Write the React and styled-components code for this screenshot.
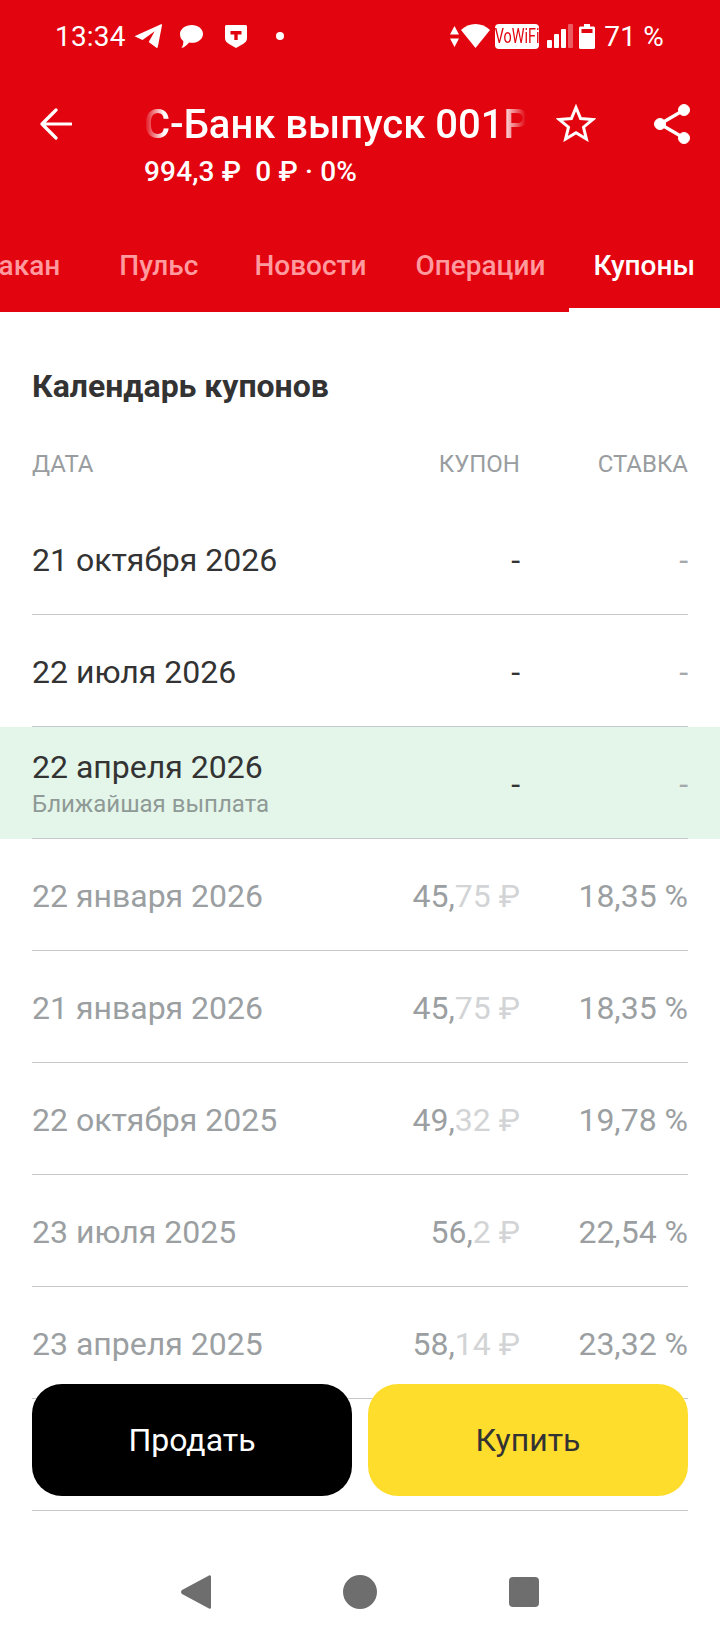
import React from "react";
import styled, { createGlobalStyle } from "styled-components";

const GlobalStyle = createGlobalStyle`
  html, body {
    margin: 0;
    padding: 0;
    background: #fff;
  }
  body {
    font-family: Roboto, "Liberation Sans", sans-serif;
  }
`;

const TABS = [
  { label: "Стакан" },
  { label: "Пульс", extra: 10 },
  { label: "Новости", extra: 7 },
  { label: "Операции" },
  { label: "Купоны", active: true, extra: -1 },
];

const ROWS = [
  { date: "21 октября 2026" },
  { date: "22 июля 2026" },
  { date: "22 апреля 2026", note: "Ближайшая выплата" },
  { date: "22 января 2026", whole: "45,", frac: "75", rate: "18,35 %" },
  { date: "21 января 2026", whole: "45,", frac: "75", rate: "18,35 %" },
  { date: "22 октября 2025", whole: "49,", frac: "32", rate: "19,78 %" },
  { date: "23 июля 2025", whole: "56,", frac: "2", rate: "22,54 %" },
  { date: "23 апреля 2025", whole: "58,", frac: "14", rate: "23,32 %" },
];

function App() {
  return (
    <Page>
      <GlobalStyle />
      <Header>
        <StatusBar>
          <Time>13:34</Time>
          <StatusIcon $left={8}>
            <svg width="28" height="24" viewBox="0 0 28 24" fill="#fff">
              <path d="M0.5 12.2 27 0.3c.7-.3 1.2.2 1 1L23.8 23c-.2.9-1 1.2-1.7.6l-7.4-5.700 6-10.600-12.200 8.600z" />
            </svg>
          </StatusIcon>
          <StatusIcon $left={18}>
            <svg width="23" height="23" viewBox="0 0 23 23" fill="#fff">
              <path d="M11.800 0C18 0 23 3.900 23 8.900s-5 8.900-11.200 8.900c-1 0-1.900-.1-2.800-.3C7.400 19.800 4.600 22.300 1.500 23c1.300-2 2-4.300 1.800-6.900C1.200 14.500 0 11.900 0 8.900 0 3.900 5.500 0 11.800 0z" />
            </svg>
          </StatusIcon>
          <StatusIcon $left={22}>
            <svg width="22" height="23" viewBox="0 0 22 23">
              <path fill="#fff" d="M1.500 0h19c.8 0 1.500.7 1.500 1.500V13c0 3-1.500 4.500-4 6l-7 4-7-4c-2.500-1.500-4-3-4-6V1.500C0 .7.700 0 1.500 0z" />
              <path fill="#e2040f" d="M5.500 6h11v3.500h-3.800V15H9.300V9.500H5.500z" />
            </svg>
          </StatusIcon>
          <StatusIcon $left={29}>
            <svg width="8" height="8" viewBox="0 0 8 8" fill="#fff">
              <circle cx="4" cy="4" r="4" />
            </svg>
          </StatusIcon>
          <StatusRight>
            <StatusIcon>
              <svg width="9" height="21" viewBox="0 0 9 21" fill="#fff">
                <path d="M4.500 0 9 8.500H0zM0 12.500h9L4.500 21z" />
              </svg>
            </StatusIcon>
            <StatusIcon $left={2}>
              <svg width="29" height="24" viewBox="0 0 29 24" fill="#fff">
                <path d="M14.500 0C20 0 25 2.200 29 6L14.500 24 0 6C4 2.200 9 0 14.500 0z" />
              </svg>
            </StatusIcon>
            <VoWifi>
              <VoWifiText>VoWiFi</VoWifiText>
            </VoWifi>
            <StatusIcon $left={8}>
              <svg width="26" height="24" viewBox="0 0 26 24" fill="#fff">
                <rect x="0" y="16" width="5" height="8" rx="1" />
                <rect x="7" y="10" width="5" height="14" rx="1" />
                <rect x="14" y="5" width="5" height="19" rx="1" />
                <rect x="21" y="0" width="5" height="24" rx="1" opacity="0.35" />
              </svg>
            </StatusIcon>
            <StatusIcon $left={6}>
              <svg width="16" height="25" viewBox="0 0 16 25">
                <path fill="#fff" d="M5 0h6v2.500h3.500c.8 0 1.500.7 1.500 1.500v19.500c0 .8-.7 1.500-1.500 1.500h-13C.700 25 0 24.300 0 23.500V4c0-.8.700-1.500 1.500-1.500H5z" />
                <rect x="2.500" y="5" width="11" height="4" fill="#e2040f" />
              </svg>
            </StatusIcon>
            <Battery>71 %</Battery>
          </StatusRight>
        </StatusBar>

        <Toolbar>
          <BackButton>
            <svg width="32" height="32" viewBox="0 0 32 32" fill="none" stroke="#fff" strokeWidth="3.200" strokeLinecap="round" strokeLinejoin="round">
              <path d="M31 16H2M16 2 2 16l14 14" />
            </svg>
          </BackButton>
          <TitleBlock>
            <TitleClip>
              <TitleText>С-Банк выпуск 001Р</TitleText>
            </TitleClip>
            <PriceLine>994,3 ₽&nbsp;&nbsp;0 ₽ · 0%</PriceLine>
          </TitleBlock>
          <StarButton>
            <svg width="40" height="38" viewBox="0 0 40 38" fill="none" stroke="#fff" strokeWidth="3" strokeLinejoin="miter">
              <path d="M20 3.500 24.600 14.500 36.800 15.400 27.500 23.200 30.400 35 20 28.700 9.600 35 12.500 23.200 3.200 15.400 15.400 14.500z" />
            </svg>
          </StarButton>
          <ShareButton>
            <svg width="36" height="40" viewBox="0 0 36 40" fill="#fff" stroke="#fff">
              <circle cx="6" cy="20" r="5.500" />
              <circle cx="30" cy="6" r="5.500" />
              <circle cx="30" cy="34" r="5.500" />
              <path d="M6 20 30 6M6 20l24 14" fill="none" strokeWidth="3.200" />
            </svg>
          </ShareButton>
        </Toolbar>

        <TabRow>
          {TABS.map((tab) => (
            <Tab key={tab.label} $active={tab.active} $extra={tab.extra}>
              {tab.label}
            </Tab>
          ))}
        </TabRow>
      </Header>

      <Content>
        <SectionTitle>Календарь купонов</SectionTitle>
        <Head>
          <HeadCell>ДАТА</HeadCell>
          <HeadCell $right>КУПОН</HeadCell>
          <HeadCell $right>СТАВКА</HeadCell>
        </Head>

        {ROWS.map((row) => (
          <Row key={row.date} $next={!!row.note}>
            <RowInner>
              <DateCell>
                <DateText $past={!!row.whole}>{row.date}</DateText>
                {row.note && <Note>{row.note}</Note>}
              </DateCell>
              {row.whole ? (
                <>
                  <Value>
                    {row.whole}
                    <Faint>{row.frac} ₽</Faint>
                  </Value>
                  <Value>{row.rate}</Value>
                </>
              ) : (
                <>
                  <Dash>-</Dash>
                  <Dash $muted>-</Dash>
                </>
              )}
            </RowInner>
          </Row>
        ))}
        {/* this row sits fully behind the buttons */}
        <Row>
          <RowInner />
        </Row>
      </Content>

      <Actions>
        <ActionButton $kind="sell">Продать</ActionButton>
        <ActionButton $kind="buy">Купить</ActionButton>
      </Actions>

      <NavBar>
        <svg width="30" height="34" viewBox="0 0 30 34" fill="#6e6e6e">
          <path d="M28 .500c1.100-.8 2 0 2 1.500v30c0 1.500-.9 2.300-2 1.500L1 19c-1.300-1-1.300-3 0-4z" />
        </svg>
        <svg width="34" height="34" viewBox="0 0 34 34" fill="#6e6e6e">
          <circle cx="17" cy="17" r="17" />
        </svg>
        <svg width="30" height="30" viewBox="0 0 30 30" fill="#6e6e6e">
          <rect width="30" height="30" rx="4" />
        </svg>
      </NavBar>
    </Page>
  );
}

export default App;

const Page = styled.div`
  position: relative;
  width: 720px;
  height: 1640px;
  overflow: hidden;
  display: flex;
  flex-direction: column;
  background: #fff;
`;

const Header = styled.header`
  background: #e2040f;
  color: #fff;
  height: 312px;
  flex-shrink: 0;
`;

const StatusBar = styled.div`
  height: 72px;
  display: flex;
  align-items: center;
  padding: 0 56px 0 55px;
  box-sizing: border-box;
`;

const Time = styled.span`
  font-size: 28px;
  letter-spacing: 0.2px;
`;

const StatusIcon = styled.span`
  display: flex;
  margin-left: ${(props) => props.$left || 0}px;
`;

const StatusRight = styled.div`
  margin-left: auto;
  display: flex;
  align-items: center;
`;

const VoWifi = styled.span`
  margin-left: 5px;
  width: 44px;
  height: 25px;
  border-radius: 4px;
  background: #fff;
  display: flex;
  align-items: center;
  justify-content: center;
`;

const VoWifiText = styled.span`
  color: #e2040f;
  font-size: 20px;
  white-space: nowrap;
  transform: scaleX(0.72);
`;

const Battery = styled.span`
  margin-left: 9px;
  font-size: 28px;
  letter-spacing: 0.2px;
`;

const Toolbar = styled.div`
  height: 148px;
  display: flex;
  align-items: flex-start;
  padding: 26px 0 0 40px;
  box-sizing: border-box;
`;

const BackButton = styled.span`
  display: flex;
  width: 104px;
  margin-top: 10px;
`;

const TitleBlock = styled.div`
  width: 382px;
  flex-shrink: 0;
`;

const TitleClip = styled.div`
  overflow: hidden;
  padding-top: 1px;
  -webkit-mask-image: linear-gradient(to right, transparent 0, #000 20px, #000 358px, transparent 382px);
  mask-image: linear-gradient(to right, transparent 0, #000 20px, #000 358px, transparent 382px);
`;

const TitleText = styled.div`
  font-size: 40px;
  font-weight: 500;
  line-height: 51px;
  white-space: nowrap;
`;

const PriceLine = styled.div`
  font-size: 28px;
  font-weight: 500;
  letter-spacing: 0.15px;
  line-height: 44px;
  white-space: nowrap;
`;

const StarButton = styled.span`
  display: flex;
  margin: 6px 0 0 30px;
`;

const ShareButton = styled.span`
  display: flex;
  margin: 6px 0 0 58px;
`;

const TabRow = styled.nav`
  height: 92px;
  display: flex;
  justify-content: flex-end;
  overflow: hidden;
`;

const Tab = styled.div`
  flex-shrink: 0;
  padding: 0 25px 0 24px;
  margin-left: ${(props) => props.$extra || 0}px;
  line-height: 92px;
  font-size: 28px;
  font-weight: 500;
  white-space: nowrap;
  color: ${(props) => (props.$active ? "#fff" : "#ff9a9f")};
  box-shadow: ${(props) => (props.$active ? "inset 0 -4px 0 #fff" : "none")};
`;

const Content = styled.main`
  flex: 1;
  min-height: 0;
  overflow: hidden;
`;

const SectionTitle = styled.h2`
  margin: 54px 32px 20px;
  font-size: 32px;
  font-weight: 700;
  line-height: 40px;
  color: #333;
`;

const Head = styled.div`
  display: grid;
  grid-template-columns: 1fr 208px 168px;
  padding: 0 32px 2px;
  height: 77px;
  box-sizing: border-box;
  align-items: center;
`;

const HeadCell = styled.span`
  font-size: 24px;
  color: #999da0;
  text-align: ${(props) => (props.$right ? "right" : "left")};
`;

const Row = styled.div`
  padding: 0 32px;
  background: ${(props) => (props.$next ? "#e4f6ea" : "transparent")};
`;

const RowInner = styled.div`
  height: 112px;
  box-sizing: border-box;
  padding-top: 3px;
  display: grid;
  grid-template-columns: 1fr 208px 168px;
  align-items: center;
  border-bottom: 1px solid #c6c9cb;
`;

const DateCell = styled.div`
  display: flex;
  flex-direction: column;
`;

const DateText = styled.span`
  font-size: 32px;
  line-height: 40px;
  color: ${(props) => (props.$past ? "#9b9fa2" : "#333")};
`;

const Note = styled.span`
  font-size: 24px;
  line-height: 34px;
  color: #8f9a96;
`;

const Value = styled.span`
  font-size: 32px;
  color: #9b9fa2;
  text-align: right;
  white-space: nowrap;
`;

const Faint = styled.span`
  color: #d2d4d6;
`;

const Dash = styled.span`
  font-size: 32px;
  text-align: right;
  color: ${(props) => (props.$muted ? "#a5a9ab" : "#333")};
`;

const Actions = styled.div`
  position: absolute;
  left: 32px;
  right: 32px;
  top: 1384px;
  display: grid;
  grid-template-columns: 1fr 1fr;
  gap: 16px;
`;

const ActionButton = styled.button`
  height: 112px;
  border: 0;
  border-radius: 30px;
  font-family: inherit;
  font-size: 32px;
  background: ${(props) => (props.$kind === "buy" ? "#ffdd2d" : "#000")};
  color: ${(props) => (props.$kind === "buy" ? "#333" : "#fff")};
`;

const NavBar = styled.div`
  height: 129px;
  flex-shrink: 0;
  display: flex;
  align-items: center;
  justify-content: center;
  gap: 132px;
  padding-top: 33px;
  box-sizing: border-box;
`;
